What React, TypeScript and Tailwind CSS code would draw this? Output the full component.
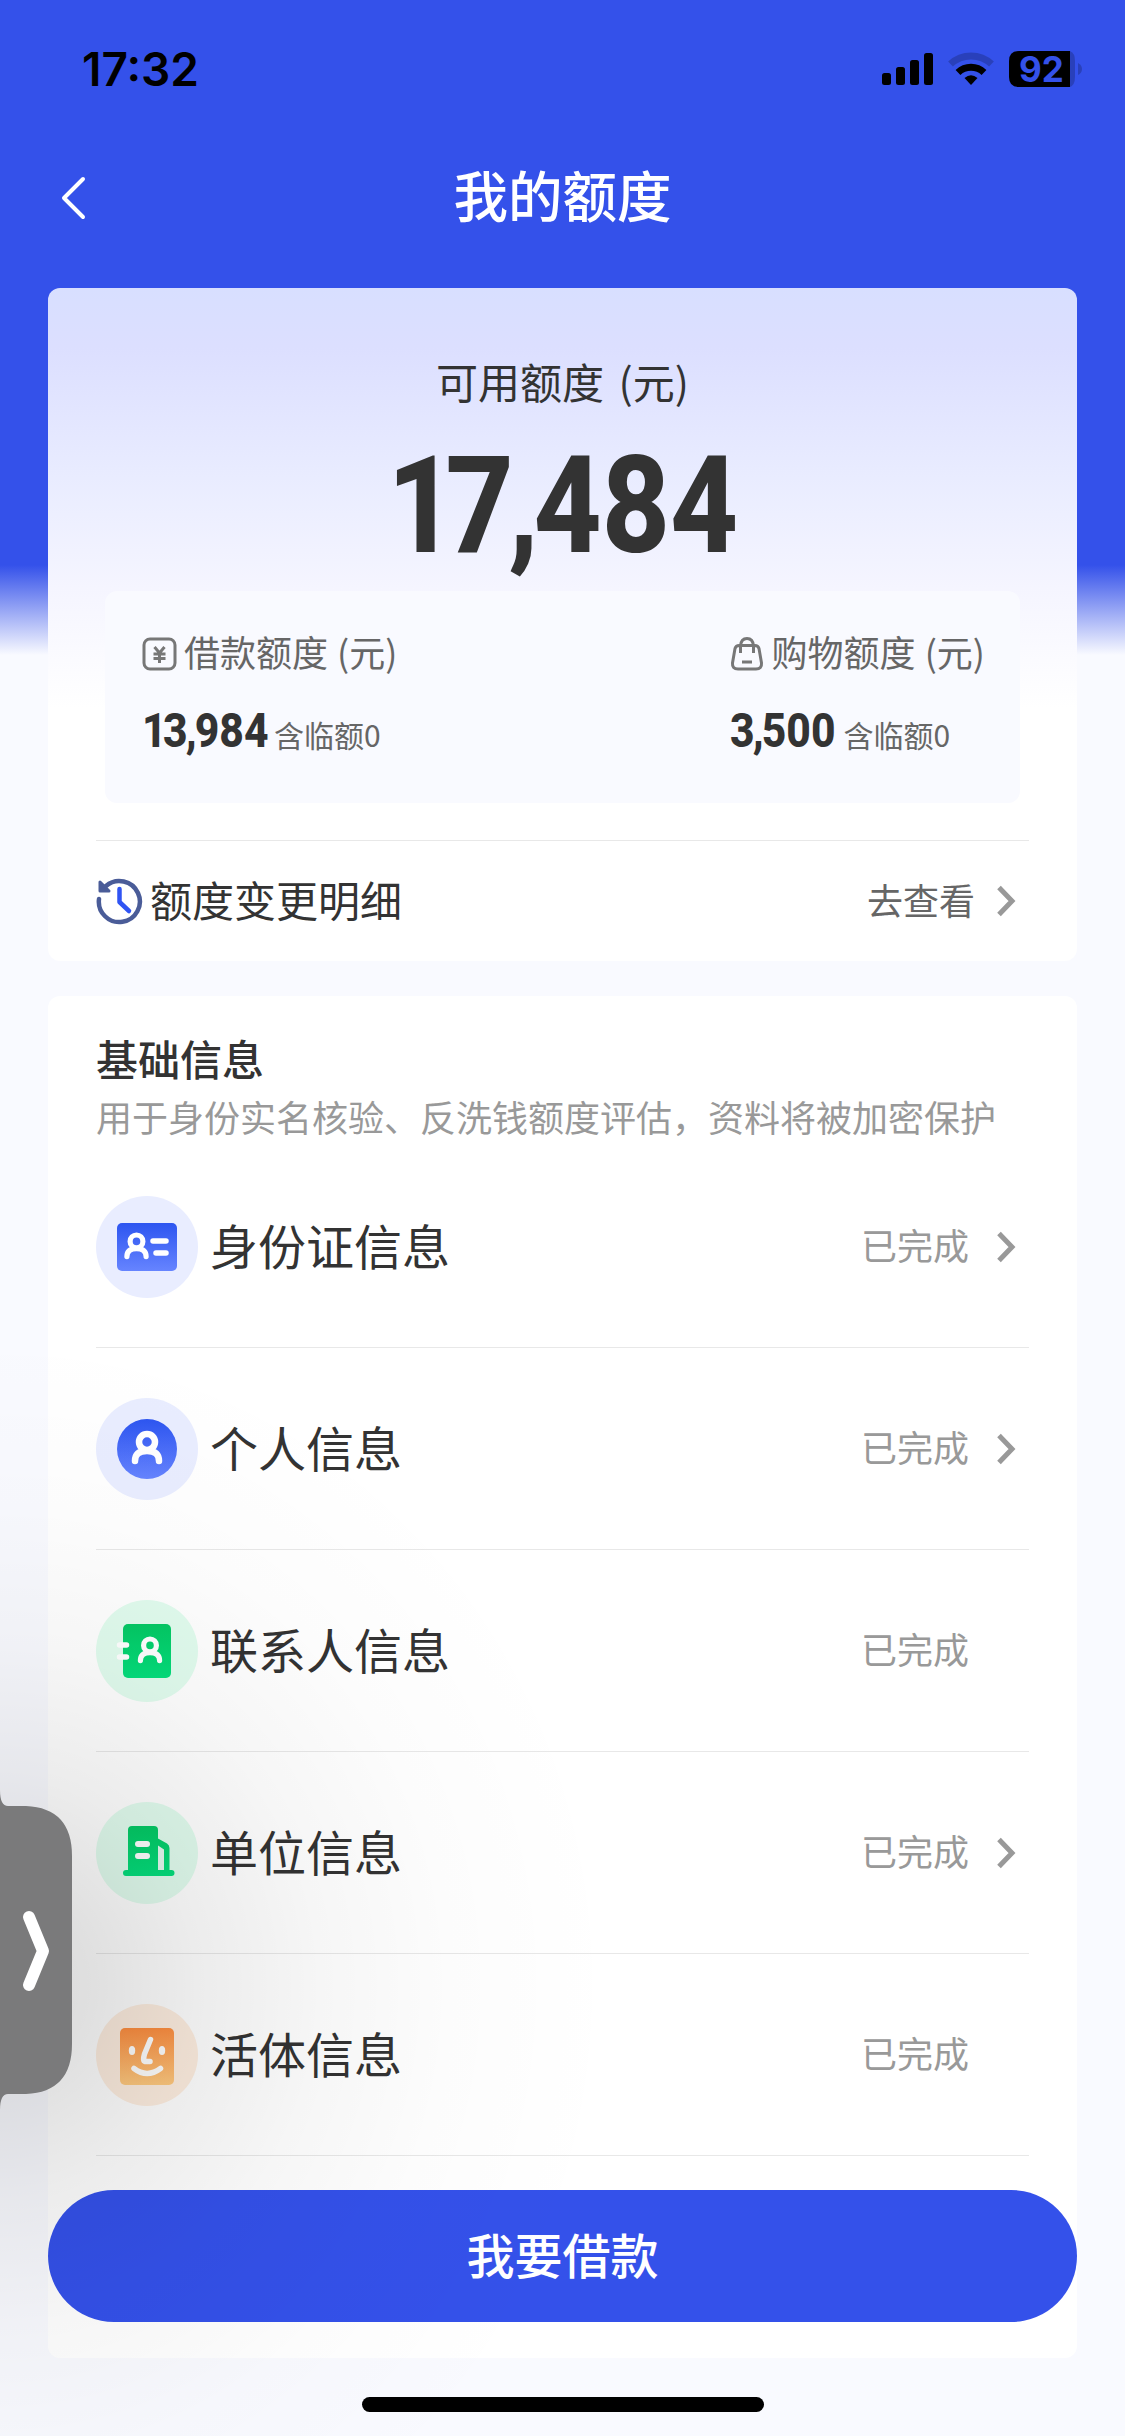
import { ReactNode } from "react"

type InfoRow = {
    title: string,
    arrow: boolean,
    bg: string,
    icon: ReactNode,
}

function Person({ x, y, s }: { x: number, y: number, s: number }) {
    return (
        <g transform={`translate(${x} ${y}) scale(${s})`} fill="none" stroke="#fff" strokeWidth="6.500" strokeLinecap="round">
            <circle cx="0" cy="-7" r="8" />
            <path d="M-12 12C-12 5 -8 2 0 2S12 5 12 12" />
        </g>
    )
}

function Defs() {
    return (
        <svg className="absolute h-0 w-0">
            <defs>
                <linearGradient id="blue" x1="0" y1="0" x2="0" y2="1">
                    <stop offset="0" stopColor="#2d55f0" />
                    <stop offset="1" stopColor="#6684ff" />
                </linearGradient>
                <linearGradient id="green" x1="0" y1="0" x2="0" y2="1">
                    <stop offset="0" stopColor="#04c864" />
                    <stop offset="1" stopColor="#04de7c" />
                </linearGradient>
                <linearGradient id="orange" x1="0" y1="0" x2="0" y2="1">
                    <stop offset="0" stopColor="#fe8e40" />
                    <stop offset="1" stopColor="#ffca80" />
                </linearGradient>
            </defs>
        </svg>
    )
}

const rows: InfoRow[] = [
    {
        title: "身份证信息",
        arrow: true,
        bg: "bg-[#e9edff]",
        icon: <>
            <rect x="21" y="27" width="60" height="48" rx="5" fill="url(#blue)" />
            <Person x={40.5} y={51} s={0.8} />
            <path d="M57 45H70M60 57H70" stroke="#fff" strokeWidth="5.500" strokeLinecap="round" />
        </>,
    },
    {
        title: "个人信息",
        arrow: true,
        bg: "bg-[#e9edff]",
        icon: <>
            <circle cx="51" cy="51" r="30" fill="url(#blue)" />
            <Person x={51} y={51} s={1} />
        </>,
    },
    {
        title: "联系人信息",
        arrow: false,
        bg: "bg-[#e1fcee]",
        icon: <>
            <rect x="27" y="24" width="48" height="54" rx="5" fill="url(#green)" />
            <path d="M23.500 45H30.500M23.500 57H30.500" stroke="#fff" strokeWidth="5.500" strokeLinecap="round" />
            <Person x={54} y={51} s={0.8} />
        </>,
    },
    {
        title: "单位信息",
        arrow: true,
        bg: "bg-[#e1fcee]",
        icon: <>
            <path d="M36 24H58Q62 24 62 28V36.500L71 41.500Q73.500 43 73.500 46V68H75.500A3 3 0 0 1 75.500 74H30A3 3 0 0 1 30 68H32V28Q32 24 36 24Z" fill="url(#green)" />
            <path d="M62 43.500L68 47.500V68H62Z" fill="#e4f8ee" />
            <path d="M42 42H51M42 54H51" stroke="#fff" strokeWidth="6" strokeLinecap="round" />
        </>,
    },
    {
        title: "活体信息",
        arrow: false,
        bg: "bg-[#feeee0]",
        icon: <>
            <rect x="24" y="24" width="54" height="57" rx="5" fill="url(#orange)" />
            <ellipse cx="36" cy="46.500" rx="3.200" ry="4.500" fill="#fff" />
            <ellipse cx="66" cy="46.500" rx="3.200" ry="4.500" fill="#fff" />
            <path d="M54.500 35.500L48.500 50Q46.500 57 49 57.500H54M38 64.500Q51 74.500 64.500 64.500" fill="none" stroke="#fff" strokeWidth="5.500" strokeLinecap="round" strokeLinejoin="round" />
        </>,
    },
]

function Arrow() {
    return (
        <svg className="h-9 w-[22px]" viewBox="0 0 22 36">
            <path d="M2 4.500L15 18L2 31.500" fill="none" stroke="#999" strokeWidth="5" />
        </svg>
    )
}

// the "1" and the comma sit tighter than the other digits
function Amount({ value }: { value: string }) {
    return (
        <>
            {value.split("").map((c, i) => (
                <span key={i} className={c === "1" ? "tracking-[-0.085em]" : c === "," || value[i + 1] === "," ? "tracking-[-0.045em]" : ""}>{c}</span>
            ))}
        </>
    )
}

function StatusBar() {
    return (
        <div className="flex h-[138px] items-start justify-between pt-[41px] pr-[42px] pl-[82px]">
            <div className="font-['Inter'] text-[46px] leading-[56px] font-semibold text-black">17:32</div>
            <div className="flex h-14 items-center">
                <svg className="h-[40px] w-[202px]" viewBox="0 0 202 40">
                    <rect x="1" y="24" width="9" height="12" rx="2.500" />
                    <rect x="15" y="18" width="9" height="18" rx="2.500" />
                    <rect x="29" y="11" width="9" height="25" rx="2.500" />
                    <rect x="43" y="4" width="9" height="32" rx="2.500" />
                    <g fill="none" stroke="#000" strokeWidth="7">
                        <path d="M69.500 15A30 30 0 0 1 110.500 15" opacity=".2" />
                        <path d="M77 23.500A19 19 0 0 1 103 23.500" />
                    </g>
                    <path d="M83.500 29Q90 23.500 96.500 29L90 36Z" />
                    <path d="M138 2H189V38H138Q128 38 128 28V12Q128 2 138 2Z" />
                    <path d="M189 2Q194 4 194 12V28Q194 36 189 38Z" opacity=".2" />
                    <path d="M197 14Q201 16 201 20T197 26Z" opacity=".2" />
                    <text x="160.500" y="32.500" textAnchor="middle" className="fill-[#3451ea] font-['Inter'] text-[35px] font-bold">92</text>
                </svg>
            </div>
        </div>
    )
}

function Quota({ icon, label, amount, width }: { icon: ReactNode, label: string, amount: string, width: string }) {
    return (
        <div>
            <div className="flex items-center gap-[6px] text-[36px] leading-[54px] text-[#666]">
                <svg className="size-9" viewBox="0 0 36 36" fill="none" stroke="#777" strokeWidth="3.500">{icon}</svg>
                <div className="-mt-[3px] mb-[3px] [word-spacing:1px]">{label}</div>
            </div>
            <div className="mt-[20px] flex items-baseline">
                <div className={width}>
                    <div className="w-max origin-left scale-x-[0.87] font-['Roboto'] text-[49px] leading-[60px] font-extrabold text-[#333]"><Amount value={amount} /></div>
                </div>
                <div className="text-[30px] leading-[40px] text-[#666]">含临额0</div>
            </div>
        </div>
    )
}

export default function App() {
    return (
        <div className="relative flex h-[2436px] w-[1125px] flex-col overflow-hidden bg-[#f9faff] bg-linear-[180deg,#3451ea_0px,#3451ea_565px,#f9faff_655px] font-['Noto_Sans_CJK_SC',sans-serif] text-[#333]">
            <Defs />
            <StatusBar />
            <div className="grid h-[150px] grid-cols-3 items-center px-[48px] pb-[32px]">
                <svg className="mt-[2px] ml-[8px] h-[48px] w-[32px]" viewBox="0 0 32 48">
                    <path d="M27 5L8 24L27 43" fill="none" stroke="#fff" strokeWidth="4" strokeLinecap="round" strokeLinejoin="round" />
                </svg>
                <div className="-mt-[6px] text-center text-[54.500px] leading-[80px] font-medium text-white">我的额度</div>
            </div>

            <div className="mx-[48px] flex h-[673px] flex-col rounded-xl bg-white bg-linear-[180deg,#d8dfff_0px,#dcdfff_60px,#e9ecff_190px,#f5f5ff_300px,#fff_420px] px-[48px]">
                <div className="mt-[63px] text-center text-[42px] leading-[60px] [word-spacing:5px]">可用额度 (元)</div>
                <div className="mt-[20px] flex h-[150px] items-center justify-center">
                    <div className="w-max scale-x-[0.87] font-['Roboto'] text-[136px] leading-[150px] font-extrabold"><Amount value="17,484" /></div>
                </div>
                <div className="mr-[9px] ml-[9px] mt-[10px] flex h-[212px] shrink-0 justify-between rounded-xl bg-[#f9faff] pr-[35px] pl-[37px] pt-[36px]">
                    <Quota
                        label="借款额度 (元)"
                        amount="13,984"
                        width="w-[132px]"
                        icon={<>
                            <rect x="2" y="3" width="31" height="30" rx="6" strokeWidth="3" />
                            <path d="M12.500 11L17.500 17L22.500 11M11.500 18H23.500M11.500 22.500H23.500M17.500 17V27" strokeWidth="3" />
                        </>}
                    />
                    <Quota
                        label="购物额度 (元)"
                        amount="3,500"
                        width="w-[114px]"
                        icon={<>
                            <path d="M9 9.500H25Q28 9.500 29 12.500L31.500 27Q32 33 26 33H8Q2 33 2.500 27L5 12.500Q6 9.500 9 9.500ZM10.500 17V10Q11 2.500 17 2.500T23.500 10V17M12 26H22" strokeWidth="3" />
                        </>}
                    />
                </div>
                <div className="mt-[37px] flex flex-1 items-center justify-between border-t border-[#e8e8e8] pr-[10px]">
                    <div className="flex items-center gap-[6px] text-[42px]">
                        <svg className="size-[48px]" viewBox="0 0 48 48" fill="none" strokeLinecap="round" strokeLinejoin="round">
                            <path d="M3 22A20.500 20.500 0 1 0 10 9" stroke="#4a5c98" strokeWidth="4.500" />
                            <path d="M4 5V14H13Z" fill="#4a5c98" stroke="#4a5c98" strokeWidth="3" />
                            <path d="M23.500 12V25L33 34" stroke="#3054f3" strokeWidth="4.500" />
                        </svg>
                        <div className="-mt-[5px]">额度变更明细</div>
                    </div>
                    <div className="flex items-center gap-[22px] text-[36px] text-[#666]">
                        <div className="-mt-[5px]">去查看</div>
                        <Arrow />
                    </div>
                </div>
            </div>

            <div className="mx-[48px] mt-[35px] flex h-[1362px] flex-col rounded-xl bg-white px-[48px] pt-[32px]">
                <div className="text-[42px] leading-[60px] font-medium">基础信息</div>
                <div className="-mt-[1px] text-[36px] leading-[59px] whitespace-nowrap text-[#999]">用于身份实名核验、反洗钱额度评估，资料将被加密保护</div>
                {rows.map((row) => (
                    <div key={row.title} className="flex h-[202px] shrink-0 items-center border-b border-[#e8e8e8] pr-[10px]">
                        <div className={`size-[102px] rounded-full ${row.bg}`}>
                            <svg className="size-[102px]" viewBox="0 0 102 102" fill="none">{row.icon}</svg>
                        </div>
                        <div className="-mt-[6px] ml-[12px] flex-1 text-[48px]">{row.title}</div>
                        <div className="-mt-[6px] mr-[28px] text-[36px] text-[#999]">已完成</div>
                        <div className="flex w-[22px] items-center">{row.arrow && <Arrow />}</div>
                    </div>
                ))}
                <div className="-mx-[48px] mt-[34px] flex h-[132px] shrink-0 items-center justify-center rounded-full bg-[#3451ea] pb-[6px] text-[48px] font-medium text-white">
                    我要借款
                </div>
            </div>
            <div className="mx-auto mt-[39px] h-[15px] w-[402px] rounded-full bg-black" />

            {/* floating side handle with its soft shadow */}
            <div className="pointer-events-none absolute top-[1250px] left-0 h-[1400px] w-[700px] bg-[radial-gradient(620px_660px_at_0px_735px,rgba(0,0,0,.15)_0%,rgba(0,0,0,.125)_14%,rgba(0,0,0,.075)_32%,rgba(0,0,0,.034)_52%,rgba(0,0,0,.011)_73%,rgba(0,0,0,0)_100%)]" />
            <svg className="absolute top-[1790px] left-0 h-[320px] w-[74px]" viewBox="0 0 74 320">
                <path d="M0 0Q0 16 8 16H26Q72 18 72 66V254Q72 302 26 304H8Q0 304 0 320Z" fill="#7a7a7b" />
                <path d="M29 127L43 161L29 195" fill="none" stroke="#fff" strokeWidth="12" strokeLinecap="round" strokeLinejoin="round" />
            </svg>
        </div>
    )
}
